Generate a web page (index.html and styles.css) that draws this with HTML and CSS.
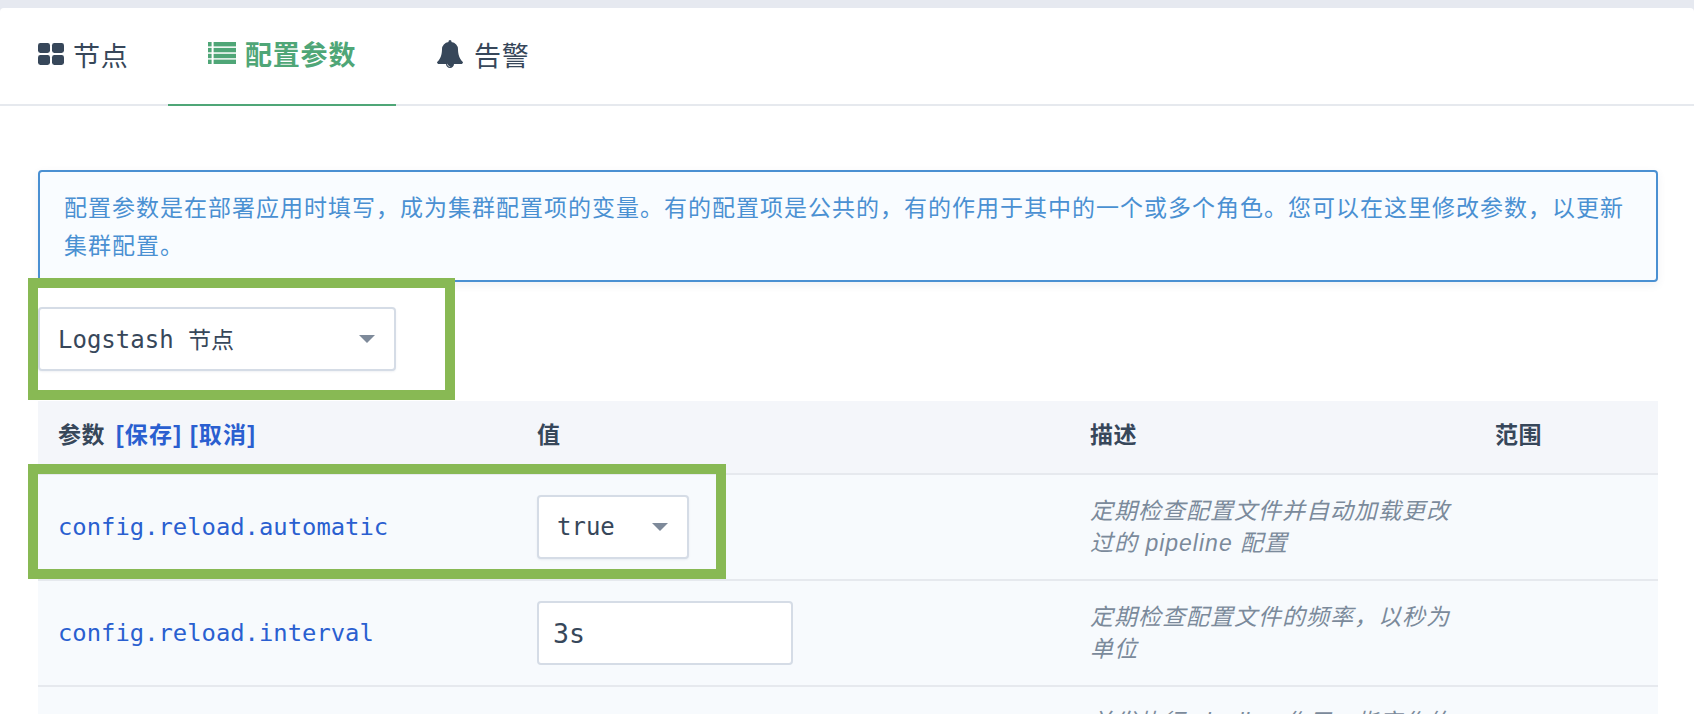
FILE: index.html
```html
<!DOCTYPE html>
<html>
<head>
  <meta charset="utf-8">
  <title>配置参数</title>
  <link rel="stylesheet" href="styles.css">
</head>
<body>
  <div class="page">
    <nav class="tabs">
      <a class="tab tab-first">
        <svg class="icon icon-grid" viewBox="0 0 26 22"><rect x="0" y="0" width="12" height="10" rx="2.4"/><rect x="14" y="0" width="12" height="10" rx="2.4"/><rect x="0" y="12" width="12" height="10" rx="2.4"/><rect x="14" y="12" width="12" height="10" rx="2.4"/></svg>
        <span>节点</span>
      </a>
      <a class="tab tab-active">
        <svg class="icon icon-list" viewBox="0 0 28 22"><rect x="0" y="0" width="3.6" height="4.4"/><rect x="5.6" y="0" width="22.4" height="4.4"/><rect x="0" y="5.9" width="3.6" height="4.4"/><rect x="5.6" y="5.9" width="22.4" height="4.4"/><rect x="0" y="11.8" width="3.6" height="4.4"/><rect x="5.6" y="11.8" width="22.4" height="4.4"/><rect x="0" y="17.6" width="3.6" height="4.4"/><rect x="5.6" y="17.6" width="22.4" height="4.4"/></svg>
        <span>配置参数</span>
      </a>
      <a class="tab tab-last">
        <svg class="icon icon-bell" viewBox="64 0 1664 1792"><path d="M912 1696q0-16-16-16-59 0-101.5-42.5t-42.5-101.5q0-16-16-16t-16 16q0 73 51.5 124.5t124.5 51.5q16 0 16-16zm816-288q0 52-38 90t-90 38h-448q0 106-75 181t-181 75-181-75-75-181h-448q-52 0-90-38t-38-90q50-42 91-88t85-119.5 74.5-158.5 50-206 19.5-260q0-152 117-282.5t307-158.5q-8-19-8-39 0-40 28-68t68-28 68 28 28 68q0 20-8 39 190 28 307 158.5t117 282.5q0 139 19.5 260t50 206 74.5 158.5 85 119.5 91 88z"/></svg>
        <span>告警</span>
      </a>
    </nav>

    <div class="content">
      <div class="alert">配置参数是在部署应用时填写，成为集群配置项的变量。有的配置项是公共的，有的作用于其中的一个或多个角色。您可以在这里修改参数，以更新集群配置。</div>

      <div class="select select-role">
        <span>Logstash <span class="cjk">节点</span></span>
        <i class="caret"></i>
      </div>

      <table class="params">
        <colgroup>
          <col class="col-name">
          <col class="col-value">
          <col class="col-desc">
          <col class="col-scope">
        </colgroup>
        <thead>
          <tr>
            <th>参数 <a>[保存]</a> <a>[取消]</a></th>
            <th>值</th>
            <th>描述</th>
            <th>范围</th>
          </tr>
        </thead>
        <tbody>
          <tr>
            <td class="name">config.reload.automatic</td>
            <td>
              <div class="select select-bool">
                <span>true</span>
                <i class="caret"></i>
              </div>
            </td>
            <td class="desc">定期检查配置文件并自动加载更改过的 pipeline 配置</td>
            <td></td>
          </tr>
          <tr>
            <td class="name">config.reload.interval</td>
            <td><input class="field" type="text" value="3s"></td>
            <td class="desc">定期检查配置文件的频率，以秒为单位</td>
            <td></td>
          </tr>
          <tr class="row-cut">
            <td></td>
            <td></td>
            <td class="desc">并发执行 pipeline 作用，指定作的</td>
            <td></td>
          </tr>
        </tbody>
      </table>
    </div>
  </div>

  <!-- green highlight frames drawn over the screenshot -->
  <div class="mark mark-role"></div>
  <div class="mark mark-row"></div>
</body>
</html>
```

FILE: styles.css
```css
html, body {
  height: 100%;
  margin: 0;
}
body {
  background: #e6e9f0;
  color: #37475a;
  font-family: "Liberation Sans", "Noto Sans CJK SC", sans-serif;
  overflow: hidden;
  position: relative;
}
.page {
  margin-top: 8px;
  background: #fff;
  border-radius: 4px 4px 0 0;
  height: 706px;
  overflow: hidden;
}

/* tabs */
.tabs {
  display: flex;
  height: 96px;
  border-bottom: 2px solid #e6e9ee;
}
.tab {
  display: flex;
  align-items: center;
  gap: 9px;
  height: 96px;
  padding: 0 40px;
  font-size: 27px;
  letter-spacing: 0.8px;
  white-space: nowrap;
  box-sizing: content-box;
}
.tab span {
  position: relative;
  top: -2px;
}
.tab-first {
  padding-left: 38px;
  padding-right: 39.4px;
}
.tab-last {
  padding-left: 41px;
}
.tab-active {
  color: #4fa677;
  font-weight: 700;
  height: 98px;
  box-sizing: border-box;
  border-bottom: 2px solid #4fa677;
  width: 228px;
  padding-right: 0;
  padding-bottom: 2px;
}
.icon {
  fill: currentColor;
  position: relative;
  top: -2px;
  flex: none;
}
.icon-grid {
  width: 26px;
  height: 22px;
}
.icon-list {
  width: 28px;
  height: 22px;
}
.icon-bell {
  width: 26px;
  height: 28px;
  margin-right: 2px;
}

/* main */
.content {
  padding: 64px 36px 0 38px;
}
.alert {
  height: 112px;
  box-sizing: border-box;
  padding: 17px 24px 0 24px;
  border: 2px solid #4a90d2;
  border-radius: 4px;
  background: #f9fcff;
  color: #4a90d2;
  font-size: 23px;
  letter-spacing: 1px;
  line-height: 38px;
  box-shadow: 0 3px 8px rgba(60, 80, 110, .08);
}

.select {
  display: flex;
  align-items: center;
  justify-content: space-between;
  box-sizing: border-box;
  background: #fff;
  border: 2px solid #d5dce6;
  border-radius: 4px;
  box-shadow: 0 1px 2px rgba(60, 80, 110, .08);
  font-family: "DejaVu Sans Mono", "Noto Sans CJK SC", monospace;
  font-size: 24px;
}
.cjk {
  font-family: "Noto Sans CJK SC", sans-serif;
  font-size: 23px;
}
.select-role {
  width: 358px;
  height: 64px;
  margin-top: 25px;
  padding: 0 19px 0 18px;
}
.select-role > span {
  position: relative;
  top: -1px;
}
.select-bool {
  width: 152px;
  height: 64px;
  padding: 0 19px 0 18px;
}
.caret {
  width: 0;
  height: 0;
  border-left: 8px solid transparent;
  border-right: 8px solid transparent;
  border-top: 8px solid #7e8a9a;
}

/* table */
.params {
  width: 1620px;
  margin-top: 30px;
  border-collapse: collapse;
  table-layout: fixed;
}
.col-name {
  width: 479px;
}
.col-value {
  width: 553px;
}
.col-desc {
  width: 405px;
}
.params th {
  height: 73px;
  padding: 0 20px 8px;
  box-sizing: border-box;
  background: #f4f6fa;
  border-bottom: 2px solid #e6e9ee;
  font-size: 23px;
  font-weight: 700;
  text-align: left;
  letter-spacing: 0.5px;
  white-space: nowrap;
}
.params th a {
  color: #2a5fd0;
  margin-left: 4px;
  letter-spacing: 1.2px;
}
.params th a + a {
  margin-left: 1px;
}
.params td {
  height: 104px;
  padding: 0 20px;
  background: #f7fafd;
  border-bottom: 2px solid #e6e9ee;
}
.params .name {
  color: #2a5fd0;
  font-family: "DejaVu Sans Mono", monospace;
  font-size: 23.85px;
}
.params .desc {
  color: #7b8a9b;
  font-size: 23px;
  font-style: italic;
  letter-spacing: 1px;
  line-height: 32px;
}
.params .row-cut .desc {
  vertical-align: top;
  padding-top: 19px;
  letter-spacing: .7px;
  white-space: nowrap;
  overflow: hidden;
}
.field {
  display: block;
  width: 256px;
  height: 64px;
  box-sizing: border-box;
  padding: 0 14px;
  background: #fff;
  border: 2px solid #d5dce6;
  border-radius: 4px;
  color: #37475a;
  font-family: "DejaVu Sans Mono", monospace;
  font-size: 26.6px;
}

/* highlight frames */
.mark {
  position: absolute;
  box-sizing: border-box;
  border: 10px solid #88b954;
}
.mark-role {
  left: 28px;
  top: 278px;
  width: 427px;
  height: 122px;
  background: #fff;
  z-index: 0;
}
.mark-row {
  left: 28px;
  top: 464px;
  width: 698px;
  height: 115px;
}
.select-role {
  position: relative;
  z-index: 1;
}
```
